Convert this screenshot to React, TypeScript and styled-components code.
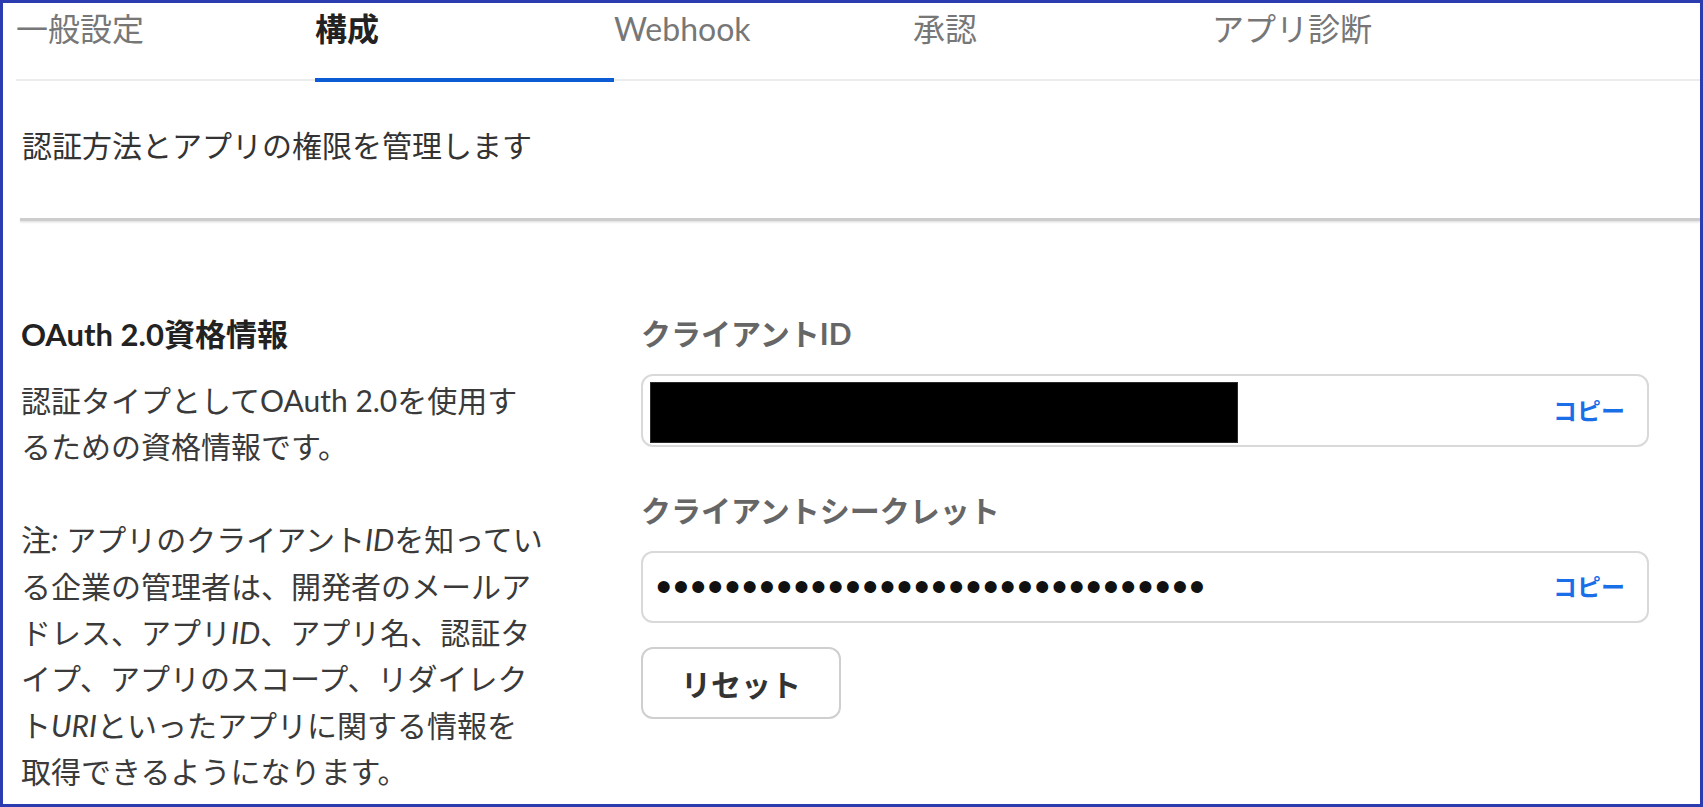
import React from "react";
import styled, { createGlobalStyle } from "styled-components";

const GlobalStyle = createGlobalStyle`
  html, body {
    margin: 0;
    padding: 0;
    background: #ffffff;
  }
  body {
    font-family: Lato, "Noto Sans CJK JP", sans-serif;
  }
`;

const Frame = styled.div`
  box-sizing: border-box;
  width: 1703px;
  height: 807px;
  border: 3px solid #2b3bb0;
  overflow: hidden;
  background: #ffffff;
  color: #333333;
`;

const TabBar = styled.nav`
  display: flex;
  height: 76px;
  margin-left: 13px;
  border-bottom: 2px solid #ececec;
`;

const Tab = styled.div<{ $active?: boolean }>`
  box-sizing: border-box;
  flex: 0 0 299px;
  height: 79px;
  padding-top: 6px;
  font-size: 32px;
  line-height: 40px;
  white-space: nowrap;
  color: ${(p) => (p.$active ? "#222222" : "#777777")};
  font-weight: ${(p) => (p.$active ? 700 : 400)};
  border-bottom: 4px solid ${(p) => (p.$active ? "#0b5cd5" : "transparent")};
`;

const Intro = styled.p`
  margin: 0 0 0 19px;
  padding: 44px 0 53px;
  font-size: 30px;
  line-height: 40px;
  color: #333333;
`;

const Divider = styled.hr`
  margin: 0 0 0 17px;
  border: 0;
  height: 3px;
  background: #cdcdcd;
  box-shadow: 0 1.5px 2px rgba(0, 0, 0, 0.12);
`;

const Credentials = styled.section`
  display: grid;
  grid-template-columns: 620px 1008px;
  margin-left: 18px;
  padding-top: 92px;
`;

const InfoColumn = styled.div`
  display: flex;
  flex-direction: column;
`;

const Title = styled.h3`
  margin: 0;
  font-size: 31px;
  line-height: 42px;
  font-weight: 700;
  color: #222222;
`;

const Body = styled.p<{ $gap: number }>`
  margin: ${(p) => p.$gap}px 0 0;
  font-size: 30px;
  line-height: 46.4px;
  color: #3a3a3a;
  white-space: nowrap;
`;

const Em = styled.i`
  font-style: italic;
`;

const FieldColumn = styled.div`
  display: flex;
  flex-direction: column;
  align-items: flex-start;
`;

const Label = styled.div<{ $gap: number }>`
  margin-top: ${(p) => p.$gap}px;
  font-size: 30px;
  line-height: 40px;
  font-weight: 700;
  color: #666666;
  white-space: nowrap;
`;

const Field = styled.div<{ $height: number; $gap: number }>`
  box-sizing: border-box;
  width: 1008px;
  height: ${(p) => p.$height}px;
  margin-top: ${(p) => p.$gap}px;
  border: 2px solid #d9d9d9;
  border-radius: 12px;
  display: flex;
  align-items: center;
  justify-content: space-between;
  padding: 0 22px 0 7px;
`;

const Redacted = styled.div`
  box-sizing: border-box;
  align-self: flex-start;
  margin-top: 6px;
  width: 588px;
  height: 61px;
  background: #000000;
  border: 1px solid #2a2a2a;
`;

const Masked = styled.span`
  margin-left: 6px;
  font-family: "Liberation Sans", Arial, sans-serif;
  font-size: 44px;
  line-height: 1;
  letter-spacing: 1.8px;
  color: #111111;
  white-space: nowrap;
`;

const CopyLink = styled.a`
  font-size: 24px;
  line-height: 1;
  font-weight: 700;
  color: #1a6fe8;
  text-decoration: none;
  cursor: pointer;
  white-space: nowrap;
`;

const ResetButton = styled.button`
  box-sizing: border-box;
  margin-top: 24px;
  width: 200px;
  height: 72px;
  border: 2px solid #cfcfcf;
  border-radius: 12px;
  background: #ffffff;
  font-family: inherit;
  font-size: 30px;
  font-weight: 700;
  color: #333333;
  padding: 0;
  cursor: pointer;
`;

const tabs = ["一般設定", "構成", "Webhook", "承認", "アプリ診断"];

export default function App() {
  return (
    <>
      <GlobalStyle />
      <Frame>
        <TabBar>
          {tabs.map((t) => (
            <Tab key={t} $active={t === "構成"}>
              {t}
            </Tab>
          ))}
        </TabBar>
        <Intro>認証方法とアプリの権限を管理します</Intro>
        <Divider />
        <Credentials>
          <InfoColumn>
            <Title>OAuth 2.0資格情報</Title>
            <Body $gap={22}>
              認証タイプとしてOAuth 2.0を使用す
              <br />
              るための資格情報です。
            </Body>
            <Body $gap={46.4}>
              注<Em>:</Em> アプリのクライアント<Em>ID</Em>を知ってい
              <br />
              る企業の管理者は、開発者のメールア
              <br />
              ドレス、アプリ<Em>ID</Em>、アプリ名、認証タ
              <br />
              イプ、アプリのスコープ、リダイレク
              <br />
              ト<Em>URI</Em>といったアプリに関する情報を
              <br />
              取得できるようになります。
            </Body>
          </InfoColumn>
          <FieldColumn>
            <Label $gap={0}>クライアントID</Label>
            <Field $height={73} $gap={21}>
              <Redacted />
              <CopyLink>コピー</CopyLink>
            </Field>
            <Label $gap={42.5}>クライアントシークレット</Label>
            <Field $height={72} $gap={21.5}>
              <Masked>{"•".repeat(32)}</Masked>
              <CopyLink>コピー</CopyLink>
            </Field>
            <ResetButton type="button">リセット</ResetButton>
          </FieldColumn>
        </Credentials>
      </Frame>
    </>
  );
}
